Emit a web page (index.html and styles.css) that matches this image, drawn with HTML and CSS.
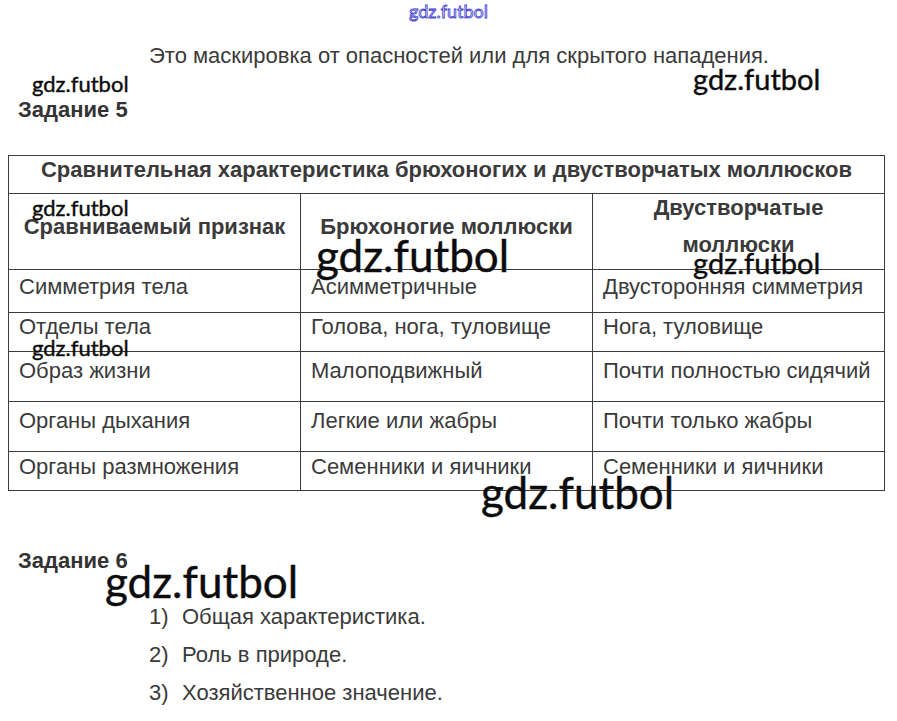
FILE: index.html
```html
<!DOCTYPE html>
<html lang="ru">
<head>
<meta charset="utf-8">
<title>Задание 5–6</title>
<link rel="stylesheet" href="styles.css">
</head>
<body>
<div class="page">
  <div class="site">gdz.futbol</div>
  <p class="intro">Это маскировка от опасностей или для скрытого нападения.</p>
  <h2 class="task">Задание 5</h2>
  <table class="cmp">
    <colgroup><col class="c"><col class="c"><col class="c"></colgroup>
    <tr class="r-title"><th colspan="3" class="title">Сравнительная характеристика брюхоногих и двустворчатых моллюсков</th></tr>
    <tr class="r-head">
      <th class="h1">Сравниваемый признак</th>
      <th class="h2">Брюхоногие моллюски</th>
      <th class="h3"><span class="l1">Двустворчатые</span><span class="l2">моллюски</span></th>
    </tr>
    <tr class="r1"><td>Симметрия тела</td><td>Асимметричные</td><td>Двусторонняя симметрия</td></tr>
    <tr class="r2"><td>Отделы тела</td><td>Голова, нога, туловище</td><td>Нога, туловище</td></tr>
    <tr class="r3"><td>Образ жизни</td><td>Малоподвижный</td><td>Почти полностью сидячий</td></tr>
    <tr class="r4"><td>Органы дыхания</td><td>Легкие или жабры</td><td>Почти только жабры</td></tr>
    <tr class="r5"><td>Органы размножения</td><td>Семенники и яичники</td><td>Семенники и яичники</td></tr>
  </table>
  <h2 class="task task6">Задание 6</h2>
  <ol class="plan">
    <li><span class="num">1)</span>Общая характеристика.</li>
    <li><span class="num">2)</span>Роль в природе.</li>
    <li><span class="num">3)</span>Хозяйственное значение.</li>
  </ol>

  <div class="wm wm-s w1">gdz.futbol</div>
  <div class="wm wm-m w2">gdz.futbol</div>
  <div class="wm wm-s w3">gdz.futbol</div>
  <div class="wm wm-l w4">gdz.futbol</div>
  <div class="wm wm-m w5">gdz.futbol</div>
  <div class="wm wm-s w6">gdz.futbol</div>
  <div class="wm wm-l w7">gdz.futbol</div>
  <div class="wm wm-l w8">gdz.futbol</div>
</div>
</body>
</html>
```

FILE: styles.css
```css
html, body {
  margin: 0;
  padding: 0;
  background: #ffffff;
}

.page {
  position: relative;
  width: 897px;
  height: 721px;
  overflow: hidden;
  font-family: "Liberation Sans", Arial, sans-serif;
  color: #3a3a3a;
}

.site {
  height: 20px;
  line-height: 22px;
  margin: 0;
  text-align: center;
  font-family: Lato, "Open Sans", sans-serif;
  font-size: 18px;
  color: #e2e2ff;
  -webkit-text-stroke: 0.8px #3b3bd0;
}

.intro {
  margin: 24px 0 0 149px;
  font-size: 22px;
  line-height: 24px;
}

.task {
  margin: 30px 0 0 18px;
  font-size: 22px;
  line-height: 24px;
  font-weight: bold;
  color: #333;
}

.cmp {
  margin: 33px 0 0 8px;
  border-collapse: collapse;
  table-layout: fixed;
  width: 877px;
  font-size: 22px;
  line-height: 23px;
}

.cmp col.c {
  width: 292px;
}

.cmp th,
.cmp td {
  border: 1px solid #3c3c3c;
  padding: 0 10px;
  vertical-align: top;
  text-align: left;
  font-weight: normal;
  overflow: visible;
  white-space: nowrap;
}

.cmp th {
  font-weight: bold;
  color: #3a3a3a;
}

.cmp .r-title th {
  height: 38px;
  text-align: center;
  vertical-align: top;
  padding-top: 2px;
  box-sizing: border-box;
}

.cmp .r-head th {
  height: 76px;
  box-sizing: border-box;
  vertical-align: middle;
  text-align: center;
  padding-bottom: 10px;
}

.cmp .r-head .h3 {
  vertical-align: top;
  padding-bottom: 0;
}

.cmp .h3 .l1,
.cmp .h3 .l2 {
  display: block;
  line-height: 28px;
}

.cmp .h3 .l2 {
  margin-top: 9px;
}

.cmp .r1 td { height: 43px; padding-top: 5px; box-sizing: border-box; }
.cmp .r2 td { height: 39px; padding-top: 2px; box-sizing: border-box; }
.cmp .r3 td { height: 50px; padding-top: 7px; box-sizing: border-box; }
.cmp .r4 td { height: 50px; padding-top: 7px; box-sizing: border-box; }
.cmp .r5 td { height: 39px; padding-top: 3px; box-sizing: border-box; }

.task6 {
  margin-top: 58px;
}

.plan {
  list-style: none;
  margin: 32px 0 0 149px;
  padding: 0;
  font-size: 22px;
  line-height: 24px;
}

.plan li {
  display: flex;
  margin-bottom: 14px;
}

.plan .num {
  width: 33px;
  flex: none;
}

.wm {
  position: absolute;
  font-family: Lato, "Open Sans", sans-serif;
  line-height: 1;
  color: #0c0c0c;
  white-space: nowrap;
  -webkit-text-stroke: 0.4px #0c0c0c;
}

.wm-s { font-size: 22px; }
.wm-m { font-size: 29px; }
.wm-l { font-size: 44px; }

.w1 { left: 32px; top: 73px; }
.w2 { left: 693px; top: 64px; }
.w3 { left: 32px; top: 197px; }
.w4 { left: 316px; top: 233px; }
.w5 { left: 693px; top: 248px; }
.w6 { left: 32px; top: 337px; }
.w7 { left: 481px; top: 470px; }
.w8 { left: 105px; top: 559px; }
```
